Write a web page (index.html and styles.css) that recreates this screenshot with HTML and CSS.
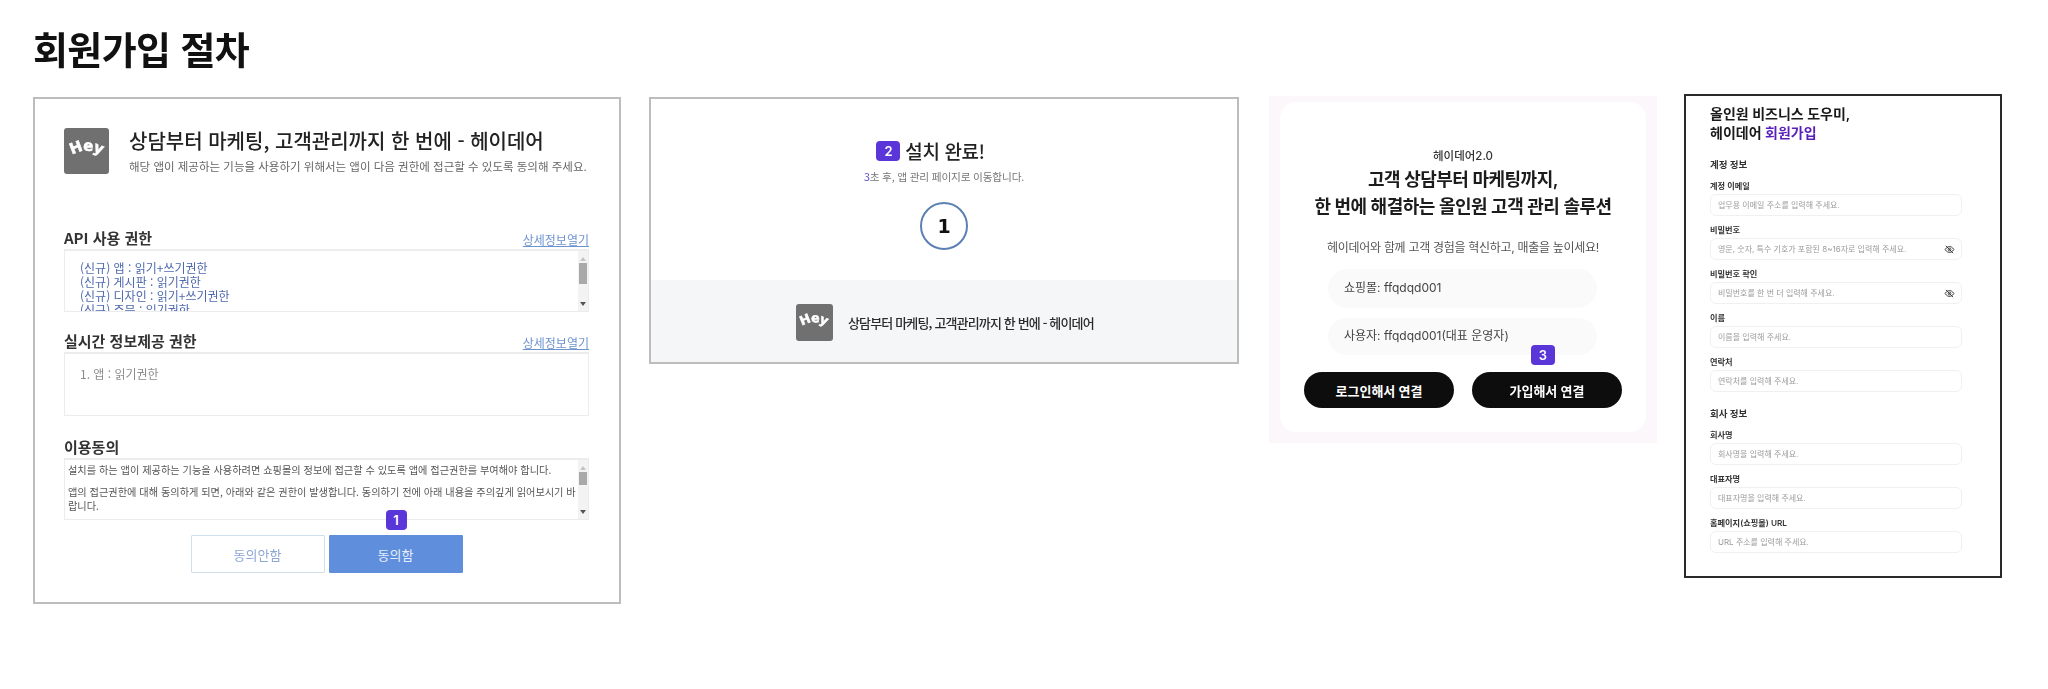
FILE: index.html
```html
<!DOCTYPE html>
<html lang="ko">
<head>
<meta charset="utf-8">
<title>회원가입 절차</title>
<link rel="stylesheet" href="styles.css">
</head>
<body>
<main class="page">
  <h1 class="page-title">회원가입 절차</h1>
  <div class="steps">

    <section class="card agree">
      <header class="app-head">
        <div class="logo logo-lg"><svg viewBox="0 0 45 46"><path id="arc1" d="M8 27 Q23 18 39 28" fill="none"/><text class="hey" font-size="15"><textPath href="#arc1">Hey</textPath></text></svg></div>
        <div class="app-text">
          <h2>상담부터 마케팅, 고객관리까지 한 번에 - 헤이데어</h2>
          <p>해당 앱이 제공하는 기능을 사용하기 위해서는 앱이 다음 권한에 접근할 수 있도록 동의해 주세요.</p>
        </div>
      </header>

      <div class="perm-head first"><h3>API 사용 권한</h3><a>상세정보열기</a></div>
      <div class="box box-api">
        <ul class="perm-list">
          <li>(신규) 앱 : 읽기+쓰기권한</li>
          <li>(신규) 게시판 : 읽기권한</li>
          <li>(신규) 디자인 : 읽기+쓰기권한</li>
          <li>(신규) 주문 : 읽기권한</li>
        </ul>
        <div class="scrollbar"><span class="arrow up"></span><span class="thumb thumb-a"></span><span class="arrow down"></span></div>
      </div>

      <div class="perm-head second"><h3>실시간 정보제공 권한</h3><a>상세정보열기</a></div>
      <div class="box box-live"><p>1. 앱 : 읽기권한</p></div>

      <div class="perm-head third"><h3>이용동의</h3></div>
      <div class="box box-terms">
        <div class="terms">
          <p>설치를 하는 앱이 제공하는 기능을 사용하려면 쇼핑몰의 정보에 접근할 수 있도록 앱에 접근권한를 부여해야 합니다.</p>
          <p>앱의 접근권한에 대해 동의하게 되면, 아래와 같은 권한이 발생합니다. 동의하기 전에 아래 내용을 주의깊게 읽어보시기 바랍니다.</p>
        </div>
        <div class="scrollbar"><span class="arrow up"></span><span class="thumb thumb-b"></span><span class="arrow down"></span></div>
      </div>

      <div class="agree-actions">
        <button class="btn-no">동의안함</button>
        <button class="btn-yes">동의함<span class="badge badge-1">1</span></button>
      </div>
    </section>

    <section class="card done">
      <div class="done-top">
        <h2 class="done-title"><span class="badge badge-2">2</span>설치 완료!</h2>
        <p class="done-sub"><em>3</em>초 후, 앱 관리 페이지로 이동합니다.</p>
        <div class="count">1</div>
      </div>
      <div class="done-foot">
        <div class="logo logo-sm"><svg viewBox="0 0 37 37"><path id="arc2" d="M6 22 Q18 14 32 23" fill="none"/><text class="hey" font-size="12.5"><textPath href="#arc2">Hey</textPath></text></svg></div>
        <strong>상담부터 마케팅, 고객관리까지 한 번에 - 헤이데어</strong>
      </div>
    </section>

    <section class="connect">
      <div class="connect-inner">
        <p class="eyebrow">헤이데어2.0</p>
        <h2>고객 상담부터 마케팅까지,<br>한 번에 해결하는 올인원 고객 관리 솔루션</h2>
        <p class="lead">헤이데어와 함께 고객 경험을 혁신하고, 매출을 높이세요!</p>
        <div class="pill">쇼핑몰: ffqdqd001</div>
        <div class="pill pill-2">사용자: ffqdqd001(대표 운영자)</div>
        <div class="connect-actions">
          <button>로그인해서 연결</button>
          <button>가입해서 연결<span class="badge badge-3">3</span></button>
        </div>
      </div>
    </section>

    <section class="signup">
      <h2>올인원 비즈니스 도우미,<br>헤이데어 <span>회원가입</span></h2>
      <h3>계정 정보</h3>
      <label>계정 이메일</label>
      <div class="field">업무용 이메일 주소를 입력해 주세요.</div>
      <label>비밀번호</label>
      <div class="field">영문, 숫자, 특수 기호가 포함된 8~16자로 입력해 주세요.<svg class="eye" viewBox="0 0 24 24"><path d="M2.5 12S6 5.5 12 5.5 21.5 12 21.5 12 18 18.5 12 18.5 2.5 12 2.5 12Z"/><circle cx="12" cy="12" r="3"/><path d="M4 4l16 16"/></svg></div>
      <label>비밀번호 확인</label>
      <div class="field">비밀번호를 한 번 더 입력해 주세요.<svg class="eye" viewBox="0 0 24 24"><path d="M2.5 12S6 5.5 12 5.5 21.5 12 21.5 12 18 18.5 12 18.5 2.5 12 2.5 12Z"/><circle cx="12" cy="12" r="3"/><path d="M4 4l16 16"/></svg></div>
      <label>이름</label>
      <div class="field">이름을 입력해 주세요.</div>
      <label>연락처</label>
      <div class="field">연락처를 입력해 주세요.</div>
      <h3 class="company">회사 정보</h3>
      <label>회사명</label>
      <div class="field">회사명을 입력해 주세요.</div>
      <label>대표자명</label>
      <div class="field">대표자명을 입력해 주세요.</div>
      <label>홈페이지(쇼핑몰) URL</label>
      <div class="field">URL 주소를 입력해 주세요.</div>
    </section>

  </div>
</main>
</body>
</html>
```
FILE: styles.css
```css
* { box-sizing: border-box; margin: 0; padding: 0; }
html, body { background: #fff; }
body {
  width: 2048px;
  height: 689px;
  overflow: hidden;
  font-family: "Noto Sans CJK KR", "Noto Sans", sans-serif;
  color: #222;
}
.page { padding: 24px 0 0 33px; filter: blur(0.5px); }
.page-title {
  font-size: 38px;
  line-height: 48px;
  font-weight: 700;
  letter-spacing: -0.6px;
  color: #111;
}
.steps { display: flex; align-items: flex-start; margin-top: 25px; }

.badge {
  display: inline-flex;
  align-items: center;
  justify-content: center;
  background: #5a35d8;
  color: #fff;
  border-radius: 4px;
  font-family: Inter, sans-serif;
  font-weight: 600;
  font-size: 13px;
}

.card { background: #fff; border: 2px solid #bdbdbd; flex: none; }
.logo { background: #707070; border-radius: 3px; flex: none; }
.logo svg { display: block; width: 100%; height: 100%; }
.hey { fill: #fff; stroke: #fff; stroke-width: 0.5px; font-family: "DejaVu Sans", sans-serif; font-weight: 700; letter-spacing: -0.8px; }
.logo-lg { width: 45px; height: 46px; }
.logo-sm { width: 37px; height: 37px; }

/* step 1 */
.agree { width: 588px; height: 507px; padding: 29px 30px 0 29px; }
.app-head { display: flex; gap: 20px; height: 46px; }
.app-text h2 { font-size: 20px; line-height: 28px; font-weight: 500; color: #222; white-space: nowrap; margin-top: -1px; }
.app-text p { font-size: 11.5px; line-height: 18px; color: #666; white-space: nowrap; margin-top: 2px; }
.perm-head { display: flex; justify-content: space-between; align-items: flex-end; height: 20px; }
.perm-head h3 { font-size: 15px; line-height: 20px; font-weight: 700; color: #333; }
.perm-head a { font-size: 12px; line-height: 16px; color: #6d93cf; text-decoration: underline; }
.perm-head.first { margin-top: 54px; }
.perm-head.second { margin-top: 19px; }
.perm-head.third { margin-top: 21px; }
.box { border: 1px solid #ececec; border-top-width: 2px; position: relative; margin-top: 1px; overflow: hidden; display: flex; }
.box-api { height: 63px; }
.box-live { height: 64px; padding: 12px 15px; font-size: 12px; line-height: 16px; color: #8c8c8c; }
.box-terms { height: 62px; }
.perm-list { list-style: none; flex: 1; padding: 10px 15px 0; font-size: 12px; line-height: 14px; color: #4d68ae; }
.scrollbar { width: 10px; flex: none; background: #f3f3f3; position: relative; }
.thumb { position: absolute; left: 1px; width: 8px; background: #a9a9a9; }
.thumb-a { top: 12px; height: 21px; }
.thumb-b { top: 12px; height: 13px; }
.arrow { position: absolute; left: 2px; width: 0; height: 0; border-left: 3px solid transparent; border-right: 3px solid transparent; }
.arrow.up { top: 6px; border-bottom: 4px solid #c4c4c4; }
.arrow.down { bottom: 5px; border-top: 4px solid #555; }
.terms { flex: 1; padding: 3px 2px 0 3px; font-size: 10.2px; line-height: 14.5px; color: #555; }
.terms p + p { margin-top: 7px; }
.agree-actions { display: flex; justify-content: center; gap: 4px; margin-top: 15px; }
.agree-actions button { width: 134px; height: 38px; font: inherit; font-size: 13px; border-radius: 1px; }
.btn-no { background: #fff; border: 1px solid #cfdfee; color: #8ea6d4; }
.btn-yes { background: #5f8fdc; border: 0; color: #e6eefb; position: relative; }
.badge-1 { position: absolute; left: 57px; top: -25px; width: 21px; height: 20px; }

/* step 2 */
.done { width: 590px; height: 267px; margin-left: 28px; display: flex; flex-direction: column; }
.done-top { height: 181px; padding-top: 40px; display: flex; flex-direction: column; align-items: center; }
.done-title { font-size: 19px; line-height: 24px; font-weight: 500; letter-spacing: -0.4px; color: #222; display: flex; align-items: center; gap: 5px; margin-left: -27px; }
.badge-2 { width: 24px; height: 20px; }
.done-sub { font-size: 10.7px; line-height: 16px; color: #777; letter-spacing: -0.2px; margin-top: 6px; }
.done-sub em { font-style: normal; color: #5a50d0; }
.count { width: 48px; height: 48px; border: 2px solid #5d80b3; border-radius: 50%; margin-top: 17px; display: flex; align-items: center; justify-content: center; font-family: "DejaVu Sans", sans-serif; font-weight: 700; font-size: 19px; color: #111; }
.done-foot { flex: 1; background: #f4f6f7; display: flex; align-items: center; padding: 2px 0 0 145px; gap: 15px; }
.done-foot strong { font-size: 13px; font-weight: 500; color: #2b2b2b; letter-spacing: -0.85px; white-space: nowrap; }

/* step 3 */
.connect { width: 388px; height: 347px; margin-left: 30px; margin-top: -1px; background: #fbf7fb; padding: 6px 11px 11px; flex: none; }
.connect-inner { height: 330px; background: #fff; border-radius: 16px; padding-top: 46px; text-align: center; font-family: Inter, "Noto Sans CJK KR", sans-serif; }
.eyebrow { font-size: 11.5px; line-height: 16px; font-weight: 500; color: #333; }
.connect-inner h2 { font-size: 18px; line-height: 27px; font-weight: 600; letter-spacing: -0.5px; color: #1c1c1c; margin-top: 2px; }
.lead { font-size: 12px; line-height: 18px; letter-spacing: -0.3px; color: #555; margin-top: 19px; }
.pill { width: 269px; height: 39px; margin: 12px 0 0 48px; padding-left: 16px; background: #fafafa; border-radius: 20px; font-size: 12px; line-height: 38px; color: #444; text-align: left; }
.pill-2 { height: 37px; margin-top: 10px; line-height: 36px; }
.connect-actions { display: flex; justify-content: center; gap: 18px; margin-top: 17px; }
.connect-actions button { width: 150px; height: 36px; background: #0d0d0d; color: #fff; border: 0; border-radius: 18px; font: inherit; font-size: 13px; font-weight: 600; position: relative; }
.badge-3 { position: absolute; left: 59px; top: -27px; width: 24px; height: 20px; }

/* step 4 */
.signup { width: 318px; height: 484px; margin-left: 27px; margin-top: -3px; border: 2px solid #2a2a2a; background: #fff; padding: 8px 38px 0 24px; font-family: Inter, "Noto Sans CJK KR", sans-serif; flex: none; }
.signup h2 { font-size: 14px; line-height: 19px; font-weight: 600; color: #1a1a1a; }
.signup h2 span { color: #5a1fb8; }
.signup h3 { font-size: 9.5px; line-height: 14px; font-weight: 600; color: #333; margin-top: 16px; }
.signup h3.company { margin-top: 15px; }
.signup label { display: block; font-size: 8.2px; line-height: 12px; font-weight: 600; color: #333; margin-top: 8px; }
.field { height: 22px; margin-top: 2px; border: 1px solid #f0f0f2; border-radius: 6px; padding-left: 7px; font-size: 8px; line-height: 20px; color: #9b9b9b; position: relative; }
.eye { position: absolute; right: 6px; top: 5px; width: 11px; height: 11px; fill: none; stroke: #333; stroke-width: 2; }
```
